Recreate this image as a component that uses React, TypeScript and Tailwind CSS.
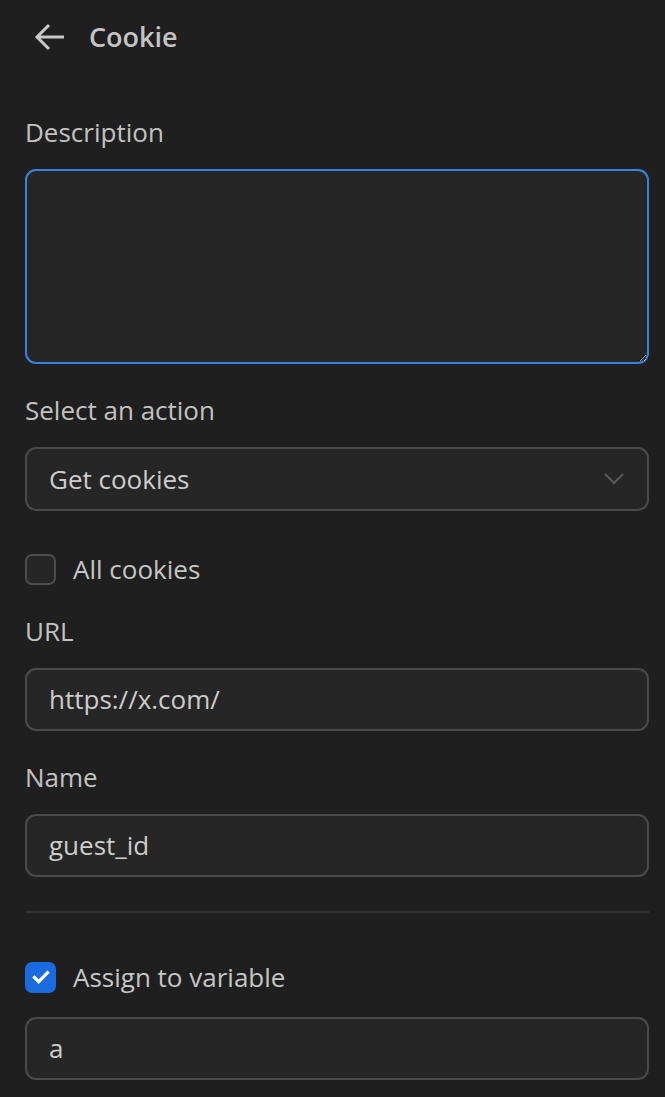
import React from 'react';

function Field({ label, children }: { label: string; children: React.ReactNode }) {
  return (
    <div className="flex flex-col">
      <label className="text-[26px] leading-[32px] text-[#c2c2c2] mb-[21px]">{label}</label>
      {children}
    </div>
  );
}

function TextInput({ value }: { value: string }) {
  return (
    <div className="h-[63px] rounded-[11px] border-2 border-[#4a4a4a] bg-[#262626] flex items-center px-[22px] text-[26px] text-[#cdcdcd]">
      {value}
    </div>
  );
}

function Checkbox({ checked, label }: { checked: boolean; label: string }) {
  return (
    <div className="flex items-center gap-[17px] h-[32px]">
      {checked ? (
        <div className="w-[31px] h-[31px] rounded-[7px] bg-[#1b6be0] flex items-center justify-center">
          <svg width="20" height="20" viewBox="0 0 20 20" fill="none">
            <path d="M3.5 10.5l4.2 4.2 8.8-9" stroke="white" strokeWidth="3.2" strokeLinecap="square" />
          </svg>
        </div>
      ) : (
        <div className="w-[31px] h-[31px] rounded-[7px] border-2 border-[#4d4d4d] bg-[#262626]" />
      )}
      <span className="text-[26px] text-[#c6c6c6]">{label}</span>
    </div>
  );
}

export default function App() {
  return (
    <div
      className="w-full min-h-screen bg-[#1f1f1f] pl-[25px] pr-[16px] pb-[20px]"
      style={{ fontFamily: '"Open Sans", "Noto Sans", sans-serif' }}
    >
      {/* header */}
      <div className="flex items-center h-[74px] pl-[8px] gap-[22px]">
        <svg width="34" height="34" viewBox="0 0 34 34" fill="none">
          <path d="M31 17H4M16 5L4 17l12 12" stroke="#c8c8c8" strokeWidth="3" />
        </svg>
        <span className="text-[27px] font-semibold text-[#c4c4c4]">Cookie</span>
      </div>

      <div className="flex flex-col gap-[30px] mt-[42px]">
        <Field label="Description">
          <textarea className="h-[195px] rounded-[11px] border-2 border-[#3b82e0] bg-[#262626] outline-none resize-y text-[26px] text-[#cdcdcd] px-[22px] py-[10px]" />
        </Field>

        <Field label="Select an action">
          <div className="h-[64px] rounded-[11px] border-2 border-[#4a4a4a] bg-[#262626] flex items-center justify-between pl-[22px] pr-[23px] text-[26px] text-[#cdcdcd]">
            <span>Get cookies</span>
            <svg width="20" height="12" viewBox="0 0 20 12" fill="none">
              <path d="M1 1l9 9 9-9" stroke="#5a5a5a" strokeWidth="2" />
            </svg>
          </div>
        </Field>

        <div className="mt-[12px]">
          <Checkbox checked={false} label="All cookies" />
        </div>

        <Field label="URL">
          <TextInput value="https://x.com/" />
        </Field>

        <Field label="Name">
          <TextInput value="guest_id" />
        </Field>

        <div className="h-[2px] bg-[#333333] mt-[4px]" />

        <div className="mt-[18px] flex flex-col gap-[24px]">
          <Checkbox checked={true} label="Assign to variable" />
          <TextInput value="a" />
        </div>
      </div>
    </div>
  );
}
